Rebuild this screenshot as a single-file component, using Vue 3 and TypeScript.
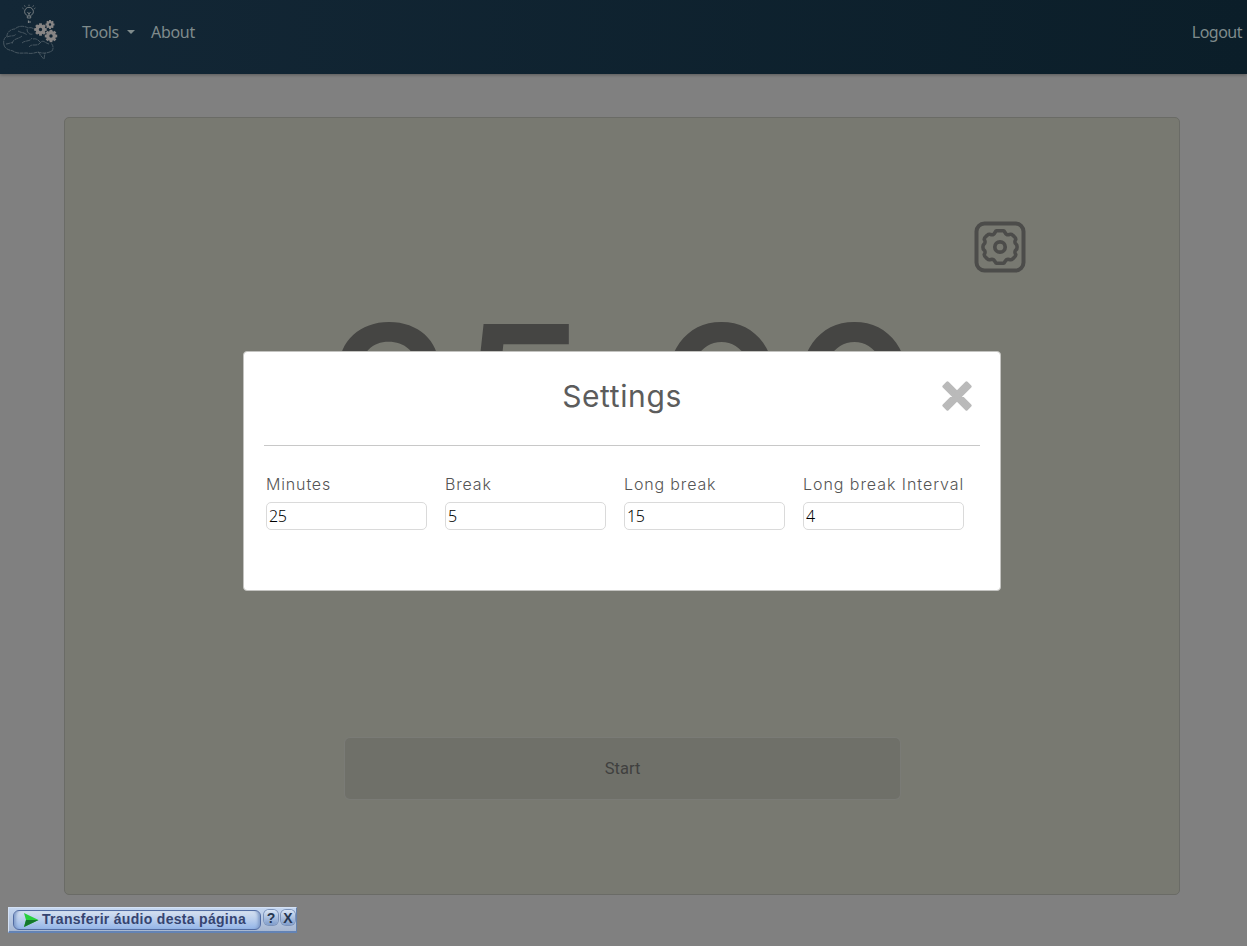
<script setup lang="ts">
import { ref } from 'vue'

interface Field { label: string; value: string; cls: string }

const fields = ref<Field[]>([
  { label: 'Minutes', value: '25', cls: 'l-min' },
  { label: 'Break', value: '5', cls: 'l-brk' },
  { label: 'Long break', value: '15', cls: 'l-long' },
  { label: 'Long break Interval', value: '4', cls: 'l-int' },
])
const digits: string[] = ['2', '5', ':', '0', '0']
const teeth: number[] = [0, 45, 90, 135, 180, 225, 270, 315]
const cogs = [
  { x: 40.5, y: 29.5, s: 1 },
  { x: 50, y: 24.5, s: 0.72 },
  { x: 51, y: 36, s: 1 },
]
</script>

<template>
  <div class="page">
    <nav class="nav">
      <svg class="logo" width="60" height="62" viewBox="0 0 60 62" fill="none">
        <g stroke="#7d8386" stroke-width=".9">
          <path d="M27.3 18v-2.3c-1.4-1-2.7-2.1-2.7-4a4.4 4.4 0 0 1 8.800 0c0 1.900-1.300 3-2.700 4V18zM27.300 16h3.400M27.500 12l1.500 2 1.500-2M29 14v2" />
          <path d="M29 4.700v1.200M24.500 5.500l.7 1.200M33.500 5.500l-.7 1.200M22.500 8l1 .8M35.300 8l-1 .8" />
          <path d="M28 22h3M28.500 20.500v2.500" stroke-width="1.200" />
        </g>
        <g stroke="#55636c" stroke-width=".8" stroke-dasharray="4 .6">
          <path d="M4 45c-1-4 0-7 3-9 0-4 4-7 8-7 4-4 10-3 13-1 3-1 5 0 7 2" />
          <path d="M4 45c1 4 5 5 9 6 4 3 9 2 14 2 4 1 8 0 11-1 5 2 10 1 14-1 2-3 1-6-1-8" />
          <path d="M7 37c4-2 7 0 9-3M12 43c2-5 7-4 10-7M18 31c3 2 6 1 9 4M22 43c3-3 8-1 10-5M27 29c0 4 3 6 6 5M29 47c3-4 8 0 11-4s5 0 9 1M38 52c3 3 3 5 6 7l1-6M6 44c3 0 5-2 7-1M33 39c4-1 6 2 8 4" />
        </g>
        <g v-for="(c, i) in cogs" :key="i" :transform="`translate(${c.x} ${c.y}) scale(${c.s})`">
          <rect v-for="t in teeth" :key="t" x="-1.400" y="-6.200" width="2.800" height="3" fill="#878585" :transform="`rotate(${t})`" />
          <circle r="3.300" stroke="#878585" stroke-width="3.200" />
        </g>
      </svg>
      <a class="link tools">Tools</a><i class="caret"></i>
      <a class="link about">About</a>
      <a class="link logout">Logout</a>
    </nav>

    <main class="card">
      <div class="gear-row">
        <svg width="52" height="52" viewBox="0 0 52 52" fill="none" stroke="#4c4c4a" stroke-width="4">
          <rect x="2.500" y="2.500" width="47" height="47" rx="8" />
          <path stroke-width="3.600" stroke-linejoin="round" d="M22.500 9.800h7c1.600 0 1.400 4 4.500 4c2.500-.6 3-1.300 4.500.2c1.800 1.700 3.800 3 3.200 4.600c-1 2-1.600 3 .4 4.600c1.300 1 1.300 4.600 0 5.600c-2 1.600-1.400 2.600-.4 4.600c.6 1.600-1.400 2.900-3.200 4.600c-1.500 1.500-2 .8-4.500.2c-3.100 0-2.900 4-4.500 4h-7c-1.600 0-1.400-4-4.500-4c-2.500.6-3 1.300-4.500-.2c-1.800-1.700-3.800-3-3.200-4.600c1-2 1.600-3-.4-4.600c-1.300-1-1.300-4.600 0-5.600c2-1.600 1.400-2.600.4-4.600c-.6-1.600 1.400-2.900 3.200-4.600c1.500-1.500 2-.8 4.500-.2c3.100 0 2.900-4 4.500-4z" />
          <circle cx="26" cy="26" r="5.200" stroke-width="3.700" />
        </svg>
      </div>
      <div class="timer">
        <span v-for="(d, i) in digits" :key="i" :class="d === ':' ? 'colon' : 'digit'">{{ d }}</span>
      </div>
      <button class="start">Start</button>
    </main>

    <section class="modal">
      <header class="head">
        <h2 class="title">Settings</h2>
        <svg class="close" width="32" height="32" viewBox="0 0 32 32" stroke="#bababa" stroke-linejoin="round" fill="#bababa">
          <path stroke-width="3" d="M6.500 2.800L16 12.300L25.500 2.800L29.200 6.500L19.700 16L29.200 25.500L25.500 29.200L16 19.700L6.500 29.200L2.800 25.500L12.300 16L2.800 6.500Z" />
        </svg>
      </header>
      <div class="fields">
        <label v-for="f in fields" :key="f.label" class="field">
          <span class="label" :class="f.cls">{{ f.label }}</span>
          <input v-model="f.value" class="input" />
        </label>
      </div>
    </section>

    <aside class="bar">
      <div class="pill">
        <svg width="16" height="16" viewBox="0 0 16 16">
          <path d="M1 1L15.500 8L1 15L3 8Z" fill="#27cf3d" />
          <path d="M3 8H15.500L1 15Z" fill="#14762c" />
        </svg>
        <span class="bar-text">Transferir áudio desta página</span>
      </div>
      <span class="mini">?</span><span class="mini">X</span>
    </aside>
  </div>
</template>

<style>
body { margin: 0; background: #808080; overflow: hidden; }
</style>

<style scoped>
.page { position: relative; width: 1247px; height: 946px; background: #808080; overflow: hidden; box-sizing: border-box; }
.page * { box-sizing: border-box; }
.nav { height: 74px; display: flex; align-items: flex-start; background: linear-gradient(90deg, #132736, #0b1e29); box-shadow: 0 1px 3px rgba(0, 0, 0, .3); }
.logo { display: block; flex: none; }
.link { font: 16px/24px "Noto Sans", sans-serif; color: #7f8b8c; margin-top: 20px; white-space: nowrap; }
.tools { margin-left: 22px; width: 37px; letter-spacing: -.45px; }
.caret { width: 0; margin: 30px 0 0 8px; border: 4px solid transparent; border-top-color: #7f8b8c; border-bottom: 0; }
.about { margin-left: 16px; letter-spacing: -.3px; }
.logout { margin-left: auto; margin-right: 5px; letter-spacing: -.5px; }
.card { width: 1116px; height: 778px; margin: 43px 0 0 64px; border: 1px solid #6a6b66; border-radius: 5px; background: #787971; padding-top: 103px; }
.gear-row { display: flex; justify-content: flex-end; height: 52px; padding-right: 153px; }
.timer { display: flex; height: 200px; margin: 23px 0 0 258px; padding-top: 5px; font: 500 212px/200px Inter, sans-serif; color: #454543; }
.digit { width: 133px; height: 190px; text-align: center; flex: none; }
.colon { width: 64px; height: 190px; text-align: center; flex: none; }
.start { display: block; width: 555px; height: 61px; margin: 242px 0 0 280px; padding: 0; border: 0; border-radius: 5px; background: #6f7069; box-shadow: 0 0 0 1px #7a7b76; color: #40403f; font: 400 16.500px/62px Roboto, sans-serif; }
.modal { position: absolute; left: 243px; top: 351px; width: 758px; height: 240px; background: #fff; border: 1px solid #c3c3c0; border-radius: 4px; padding: 0 20px; }
.head { position: relative; height: 94px; border-bottom: 1px solid #c8c8c8; }
.title { margin: 0; padding-top: 22px; text-align: center; color: #5c5c5c; font: 400 30px/44px Inter, sans-serif; letter-spacing: .6px; }
.close { position: absolute; right: 7px; top: 28px; }
.fields { display: flex; gap: 18px; padding: 26px 0 0 2px; }
.field { width: 161px; display: block; }
.label { display: block; height: 24px; color: #555; font: 300 16px/24px Inter, sans-serif; letter-spacing: .85px; white-space: nowrap; }
.l-int { letter-spacing: .95px; }
.input { display: block; width: 161px; height: 28px; margin-top: 6px; padding: 1px 2px; border: 1px solid #dadada; border-radius: 5px; background: #fff; color: #000; font: 300 16px/24px "Noto Sans", sans-serif; letter-spacing: -.5px; }
.bar { position: absolute; left: 8px; top: 907px; width: 289px; height: 26px; display: flex; align-items: flex-start; padding: 2px 1px 0 4px; gap: 3px; background: linear-gradient(#c5d7f1, #a7b7d1); border: 1px solid #d4e1f4; border-right-color: #6482ae; border-bottom: 2px solid #6383b5; }
.pill { width: 248px; height: 20px; display: flex; align-items: center; padding-left: 9px; border: 1px solid #526ca3; border-radius: 6px; background: linear-gradient(#d5e0f0, #b5cbec 55%, #94b5e8); box-shadow: inset 4px 0 3px -2px #829dca, inset -4px 0 3px -2px #829dca; }
.bar-text { margin: -2px 0 0 3px; font: 700 14px/18px "Liberation Sans", sans-serif; letter-spacing: .3px; color: #354470; white-space: nowrap; }
.mini { width: 14px; height: 15px; border-radius: 5px; background: linear-gradient(#d8e4f4, #7f9dcc); box-shadow: 0 0 0 1px #7c93ba; color: #26364f; font: 700 14px/16px "Liberation Sans", sans-serif; text-align: center; }
</style>
